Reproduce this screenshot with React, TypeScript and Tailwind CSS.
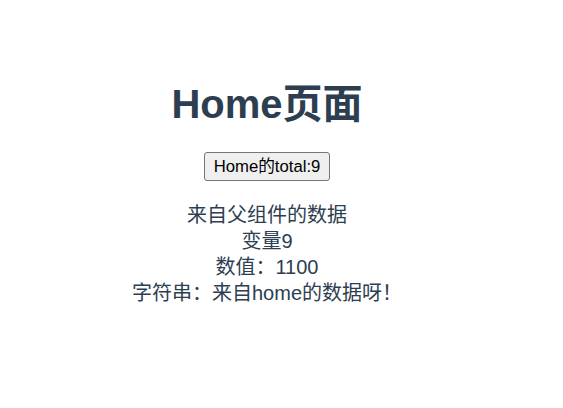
export default function App() {
    return (
        <div
            className="min-h-screen bg-white pr-[29px] text-center text-[#2c3e50]"
            style={{ fontFamily: '"Liberation Sans", Arial, "Noto Sans CJK SC", sans-serif' }}
        >
            <div className="pt-[81px]">
                <h1 className="text-[40px] font-bold leading-[46px]">Home页面</h1>

                <div className="mt-[25px]">
                    <button
                        type="button"
                        className="h-[29px] rounded-[3px] border border-[#767676] bg-[#efefef] px-[9px] text-[16.7px] leading-[19px] text-black"
                    >
                        Home的total:9
                    </button>
                </div>

                <div className="mt-[21px] text-[20px] leading-[26px]">
                    <p>来自父组件的数据</p>
                    <p>变量9</p>
                    <p>数值：1100</p>
                    <p>字符串：来自home的数据呀！</p>
                </div>
            </div>
        </div>
    );
}
